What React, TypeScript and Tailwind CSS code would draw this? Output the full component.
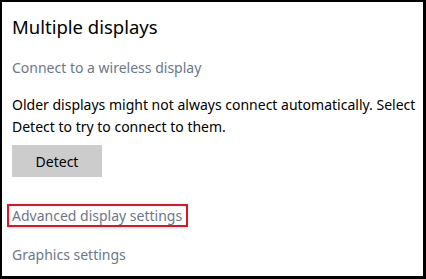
export default function App() {
  return (
    <div className="w-[426px] h-[279px] bg-white border-black border-t-2 border-l-2 border-r-[3px] border-b-[3px] pl-[10px] pt-[12px] overflow-hidden" style={{ fontFamily: '"Noto Sans", sans-serif' }}>
      <h1 className="text-[18.5px] leading-[26px] text-black">Multiple displays</h1>
      <div className="mt-[18px] text-[14px] leading-[20px] text-[#6b788b] whitespace-nowrap">Connect to a wireless display</div>
      <div className="mt-[16px] text-[14px] leading-[22px] text-black">
        <div className="whitespace-nowrap">Older displays might not always connect automatically. Select</div>
        <div className="whitespace-nowrap">Detect to try to connect to them.</div>
      </div>
      <button className="mt-[7px] w-[90px] h-[32px] bg-[#cccccc] text-[14px] text-black">Detect</button>
      <div className="mt-[27px] -ml-[5px] w-fit h-[23px] border-2 border-[#e81123] pl-[3px] pr-[4px] flex items-center text-[14px] text-[#6b788b] whitespace-nowrap">Advanced display settings</div>
      <div className="mt-[18px] text-[14px] leading-[20px] text-[#6b788b] whitespace-nowrap">Graphics settings</div>
    </div>
  );
}
